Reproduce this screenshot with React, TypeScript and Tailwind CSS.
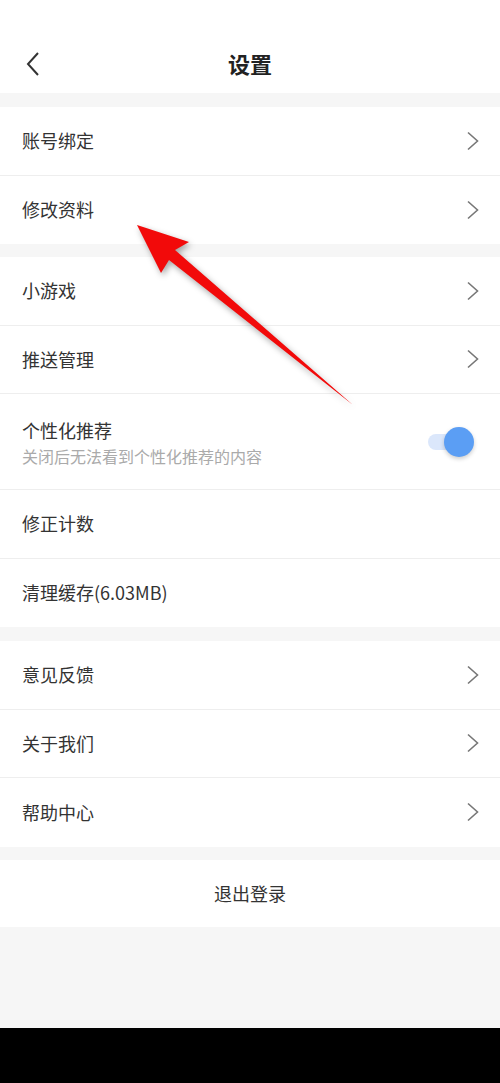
import React from "react";

const font = { fontFamily: '"Noto Sans CJK SC", "Noto Sans", sans-serif' };

function Chevron() {
  return (
    <svg width="14" height="20" viewBox="0 0 14 20" className="shrink-0">
      <path d="M2 1.5 L11.5 10 L2 18.5" fill="none" stroke="#777" strokeWidth="1.6" />
    </svg>
  );
}

function Row({ label, arrow = true, last = false }: { label: string; arrow?: boolean; last?: boolean }) {
  return (
    <div
      className={`flex h-[68.5px] items-center justify-between pl-[22px] pr-[20px] ${
        last ? "" : "border-b border-[#eeeeee]"
      }`}
    >
      <span className="text-[18px] text-[#333333]">{label}</span>
      {arrow && <Chevron />}
    </div>
  );
}

function Toggle() {
  return (
    <div className="relative h-[30px] w-[48px]">
      <div className="absolute left-[2px] top-[7px] h-[16px] w-[36px] rounded-full bg-[#dbe7fb]" />
      <div className="absolute right-[0px] top-0 h-[30px] w-[30px] rounded-full bg-[#5b9ef4] shadow-[0_2px_4px_rgba(0,0,0,0.2)]" />
    </div>
  );
}

export default function App() {
  return (
    <div className="relative flex h-[1083px] w-[500px] flex-col overflow-hidden bg-[#f6f6f6]" style={font}>
      <div className="relative flex h-[93px] items-end justify-center bg-white pb-[13px]">
        <svg width="16" height="26" viewBox="0 0 16 26" className="absolute left-[25px] top-[51px]">
          <path d="M13 2 L3 13 L13 24" fill="none" stroke="#333" strokeWidth="2" />
        </svg>
        <span className="text-[22px] font-bold text-[#222222]">设置</span>
      </div>

      <div className="mt-[14px] bg-white">
        <Row label="账号绑定" />
        <Row label="修改资料" last />
      </div>

      <div className="mt-[13px] bg-white">
        <Row label="小游戏" />
        <Row label="推送管理" />
        <div className="flex h-[96px] items-center justify-between border-b border-[#eeeeee] pl-[22px] pr-[26px]">
          <div className="flex flex-col">
            <span className="text-[18px] leading-[26px] text-[#333333]">个性化推荐</span>
            <span className="mt-[2px] text-[16px] leading-[22px] text-[#aaaaaa]">关闭后无法看到个性化推荐的内容</span>
          </div>
          <Toggle />
        </div>
        <Row label="修正计数" arrow={false} />
        <Row label="清理缓存(6.03MB)" arrow={false} last />
      </div>

      <div className="mt-[14px] bg-white">
        <Row label="意见反馈" />
        <Row label="关于我们" />
        <Row label="帮助中心" last />
      </div>

      <div className="mt-[13.5px] flex h-[67px] items-center justify-center bg-white">
        <span className="text-[18px] text-[#333333]">退出登录</span>
      </div>

      <div className="flex-1" />
      <div className="h-[55px] bg-black" />

      <svg
        width="500"
        height="1083"
        viewBox="0 0 500 1083"
        className="pointer-events-none absolute left-0 top-0"
        style={{ filter: "drop-shadow(2px 3px 3px rgba(0,0,0,0.35))" }}
      >
        <polygon points="137,225 189,242 175,250 353,405 169,260 161,273" fill="#f20a0a" />
      </svg>
    </div>
  );
}
